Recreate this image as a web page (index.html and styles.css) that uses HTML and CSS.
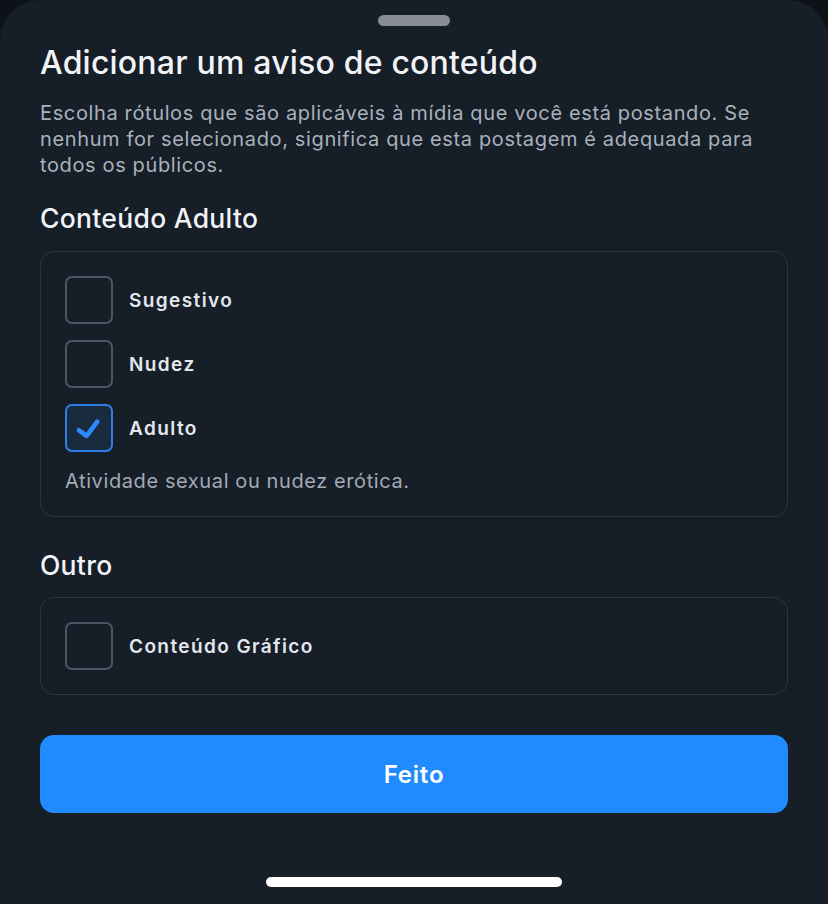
FILE: index.html
```html
<!DOCTYPE html>
<html lang="pt">
<head>
<meta charset="utf-8">
<title>Adicionar um aviso de conteúdo</title>
<link rel="stylesheet" href="styles.css">
</head>
<body>
<div class="sheet">
  <div class="handle"></div>
  <h1 class="title">Adicionar um aviso de conteúdo</h1>
  <p class="desc">Escolha rótulos que são aplicáveis à mídia que você está postando. Se nenhum for selecionado, significa que esta postagem é adequada para todos os públicos.</p>

  <h2 class="section">Conteúdo Adulto</h2>
  <div class="card">
    <div class="rows">
      <div class="row"><span class="box"></span><span class="label">Sugestivo</span></div>
      <div class="row"><span class="box"></span><span class="label">Nudez</span></div>
      <div class="row"><span class="box checked"><svg viewBox="0 0 48 48" width="44" height="44"><path d="M13 26.5 L21.5 32.5 L33 17" fill="none" stroke="#2a8bff" stroke-width="5" stroke-linecap="round" stroke-linejoin="round"/></svg></span><span class="label">Adulto</span></div>
    </div>
    <p class="note">Atividade sexual ou nudez erótica.</p>
  </div>

  <h2 class="section section-other">Outro</h2>
  <div class="card card-other">
    <div class="row"><span class="box"></span><span class="label">Conteúdo Gráfico</span></div>
  </div>

  <button class="done">Feito</button>
  <div class="indicator"></div>
</div>
</body>
</html>
```
FILE: styles.css
```css
html, body {
  margin: 0;
  padding: 0;
  background: #0d1218;
}
body {
  width: 828px;
  height: 904px;
  overflow: hidden;
  font-family: Inter, "Noto Sans", sans-serif;
}
.sheet {
  box-sizing: border-box;
  width: 828px;
  height: 904px;
  background: #161e27;
  border-radius: 40px 40px 0 0;
  padding: 15px 40px 0 40px;
  display: flex;
  flex-direction: column;
}
.handle {
  align-self: center;
  width: 72px;
  height: 11px;
  border-radius: 6px;
  background: #898c93;
}
.title {
  margin: 17px 0 0 0;
  font-size: 32px;
  line-height: 40px;
  font-weight: 500;
  color: #f1f3f6;
  letter-spacing: 0.2px;
}
.desc {
  margin: 17px 0 0 0;
  font-size: 20px;
  line-height: 26px;
  color: #a9b1bd;
  letter-spacing: 0.63px;
  font-weight: 400;
}
.section {
  margin: 24px 0 0 0;
  font-size: 26.5px;
  line-height: 32px;
  font-weight: 500;
  color: #f1f3f6;
  letter-spacing: 0.3px;
}
.section-other {
  margin-top: 32px;
}
.card {
  margin-top: 17px;
  border: 1px solid #2c3642;
  border-radius: 14px;
  padding: 24px 24px 23px 24px;
}
.card-other {
  margin-top: 16px;
  padding: 24px;
}
.rows {
  display: flex;
  flex-direction: column;
  gap: 16px;
}
.row {
  display: flex;
  align-items: center;
  gap: 16px;
}
.box {
  box-sizing: border-box;
  width: 48px;
  height: 48px;
  border: 2px solid #4a5665;
  border-radius: 7px;
  display: flex;
  align-items: center;
  justify-content: center;
}
.box.checked {
  border-color: #2f80e6;
  background: #1a2a3f;
}
.label {
  font-size: 19px;
  font-weight: 600;
  color: #e3e7ed;
  letter-spacing: 1.4px;
}
.note {
  margin: 17px 0 0 0;
  font-size: 20px;
  line-height: 24px;
  color: #a2aab6;
  letter-spacing: 0.6px;
}
.done {
  margin-top: 40px;
  height: 78px;
  border: none;
  border-radius: 14px;
  background: #208bfe;
  color: #ffffff;
  font-family: Inter, "Noto Sans", sans-serif;
  font-size: 24px;
  font-weight: 600;
  letter-spacing: 0.8px;
}
.indicator {
  align-self: center;
  margin-top: 64px;
  width: 296px;
  height: 10px;
  border-radius: 5px;
  background: #ffffff;
}
```
